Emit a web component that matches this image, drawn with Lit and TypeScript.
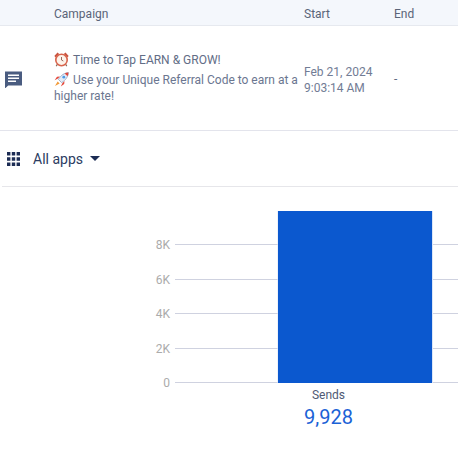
import { LitElement, html, css, svg } from "lit";
import { customElement } from "lit/decorators.js";

const ticks = [
  { y: 244.5, label: "8K" },
  { y: 279.5, label: "6K" },
  { y: 313.5, label: "4K" },
  { y: 348.5, label: "2K" },
  { y: 382.5, label: "0" },
];

@customElement("app-root")
export class AppRoot extends LitElement {
  static styles = css`
    :host { display: block; width: 458px; height: 468px; overflow: hidden; background: #fff; font-family: Roboto, sans-serif; font-size: 12px; color: #6b7690; }
    .row { display: grid; grid-template-columns: 54px 250px 90px 1fr; }
    .head { height: 25px; align-items: center; background: #f4f7fc; border-bottom: 1px solid #e6e9ef; color: #5a6478; line-height: 28px; }
    .body { height: 104px; align-items: center; border-bottom: 1px solid #e3e4ec; }
    .icon-cell { display: flex; padding-left: 5px; padding-top: 2px; }
    .msg { line-height: 16px; }
    .title { color: #626d86; margin-top: -1px; margin-bottom: 4px; }
    .emoji { display: inline-block; width: 15px; height: 15px; vertical-align: -3px; margin-right: 4px; margin-top: -2px; }
    .date { line-height: 16px; padding-top: 3px; color: #727c95; }
    .end { color: #5f6b85; padding-top: 1px; }
    .apps { height: 55px; margin-left: 2px; display: flex; align-items: center; padding-left: 5px; border-bottom: 1px solid #e6e6ea; color: #2c3c62; font-size: 14px; }
    .grid-icon { margin-right: 13px; margin-top: 1px; }
    .caret { margin-left: 7px; }
    .chart { display: block; }
    .tick { font-size: 12px; fill: #ababab; text-anchor: end; }
    .name { font-size: 12px; fill: #505a74; text-anchor: middle; }
    .value { font-size: 20px; fill: #1b62d6; text-anchor: middle; }
  `;

  render() {
    return html`
      <div class="row head"><span></span><span>Campaign</span><span>Start</span><span>End</span></div>
      <div class="row body">
        <div class="icon-cell">
          <svg width="17" height="17" viewBox="0 0 17 17"><path fill="#4a5c80" d="M0 0.500h17v14H3.200L0 17.500z"/><path fill="#fff" d="M3 3.500h11v1.400H3zM3 6.500h11v1.400H3zM3 9.500h8v1.400H3z"/></svg>
        </div>
        <div class="msg">
          <div class="title"><svg class="emoji" viewBox="0 0 15 15"><path fill="#c9543f" d="M0.300 4 3.500 0.500 5.200 2 1.800 5.500zM14.700 4 11.500 0.500 9.800 2 13.200 5.500z"/><path stroke="#8a6a5a" stroke-width="1.200" d="M3.500 12.200 2.200 14.200M11.500 12.200 12.800 14.200"/><circle cx="7.500" cy="8" r="5.700" fill="#fdf3ea" stroke="#d9644c" stroke-width="1.600"/><path fill="none" stroke="#8a5a50" stroke-width="0.900" d="M7.500 5v3l1.800 1"/></svg>Time to Tap EARN &amp; GROW!</div>
          <div><svg class="emoji" viewBox="0 0 15 15"><path fill="#e4473a" d="M4 6.500 0.600 8.200 3 4.800 6 4.500zM8.500 11 6.800 14.400 10.200 12 10.500 9z"/><path fill="#e4ebf5" stroke="#7f97b8" stroke-width="0.700" d="M14.400 0.600C10.800 0.800 7 3 4.400 7.400l3.200 3.200c4.400-2.600 6.600-6.400 6.800-10z"/><path fill="#e4473a" d="M14.400 0.600c-1.300 0-2.500 0.300-3.700 0.900l2.800 2.800c0.600-1.200 0.900-2.400 0.900-3.700z"/><circle cx="9.800" cy="5.200" r="1.400" fill="#4c9be8"/><path fill="#f29a38" d="M3.600 9.400 5.600 11.400 1 14z"/></svg>Use your Unique Referral Code to earn at a higher rate!</div>
        </div>
        <div class="date">Feb 21, 2024<br />9:03:14 AM</div>
        <div class="end">-</div>
      </div>
      <div class="apps">
        <svg class="grid-icon" width="13" height="14" viewBox="0 0 13 14"><path fill="#1c2c54" d="M0 0h3.400v3.600H0zM4.800 0h3.400v3.600H4.800zM9.600 0H13v3.600H9.600zM0 5.200h3.400v3.600H0zM4.800 5.200h3.400v3.600H4.800zM9.600 5.200H13v3.600H9.600zM0 10.400h3.400V14H0zM4.800 10.400h3.400V14H4.800zM9.600 10.400H13V14H9.600z"/></svg>
        <span>All apps</span>
        <svg class="caret" width="10" height="5" viewBox="0 0 10 5"><path fill="#1c2c54" d="M0 0h10L5 5z"/></svg>
      </div>
      <svg class="chart" width="458" height="281" viewBox="0 187 458 281">
        ${ticks.map(
          (t) => svg`
            <line x1="175" x2="458" y1=${t.y} y2=${t.y} stroke="#cfd2e0" stroke-width="1"></line>
            <text class="tick" x="170" y=${t.y + 4}>${t.label}</text>`
        )}
        <rect x="277.500" y="211" width="155.500" height="172" fill="#dbe6f7"></rect>
        <rect x="278" y="211" width="154" height="172" fill="#0b58cf"></rect>
        <text class="name" x="328.500" y="399">Sends</text>
        <text class="value" x="328.500" y="424">9,928</text>
      </svg>
    `;
  }
}
